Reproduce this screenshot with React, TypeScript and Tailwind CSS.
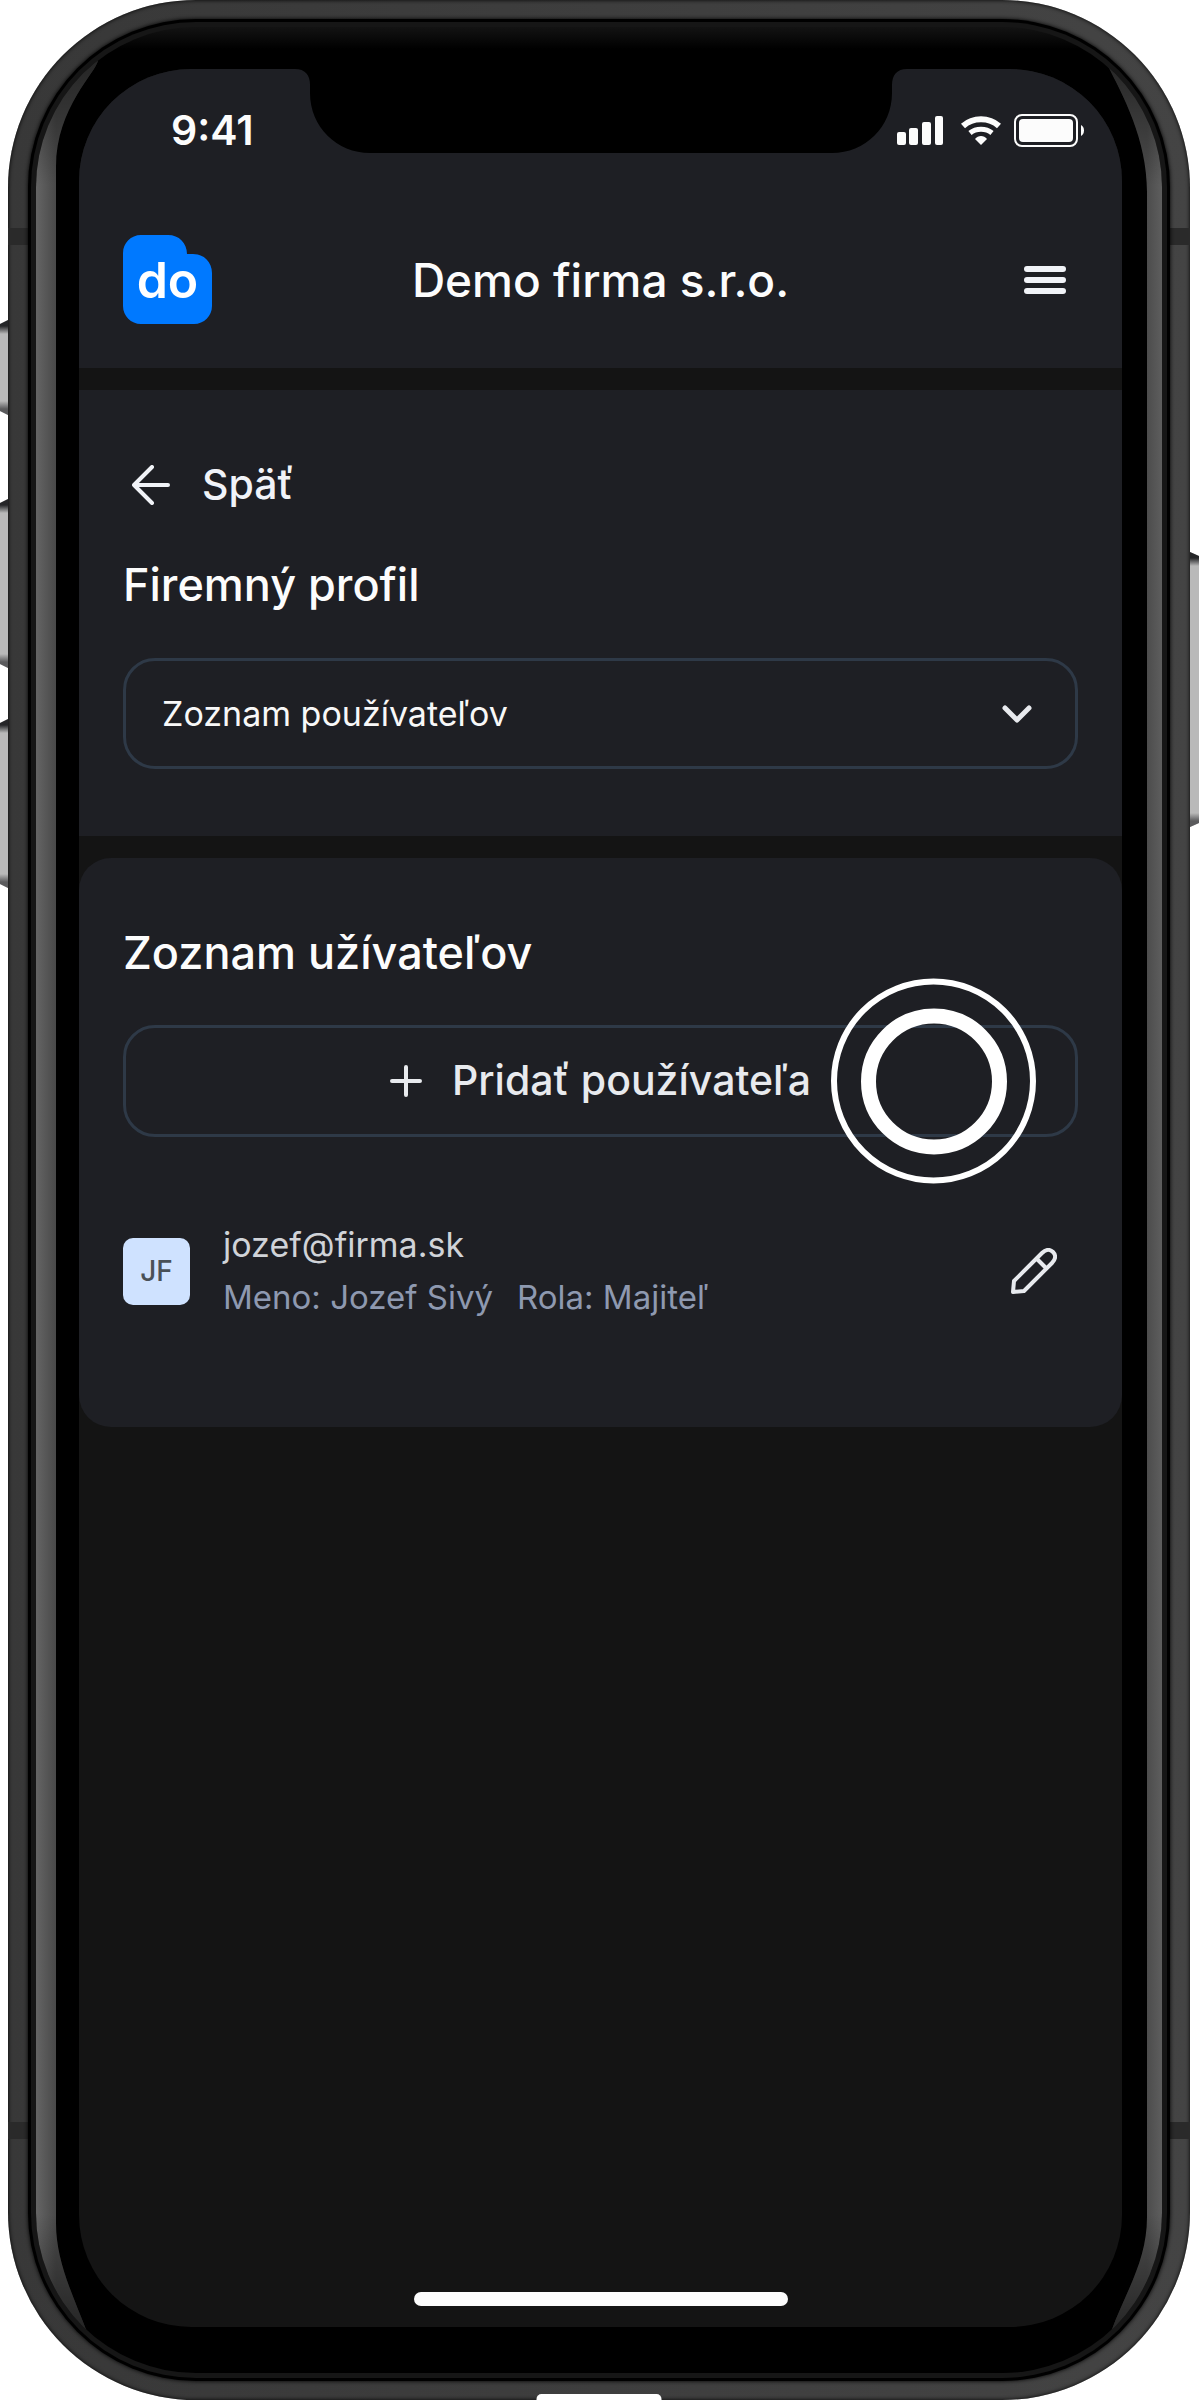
import React from 'react'
import clsx from 'clsx'

type UserRow = {
    initials: string
    email: string
    name: string
    role: string
}

const users: UserRow[] = [
    { initials: 'JF', email: 'jozef@firma.sk', name: 'Jozef Sivý', role: 'Majiteľ' },
]

const StatusIcons = () => (
    <svg width="188" height="34" viewBox="0 0 188 34" fill="#fcfcfc" aria-hidden="true">
        <rect x="0" y="18" width="9" height="13" rx="2" />
        <rect x="12" y="14" width="9" height="17" rx="2" />
        <rect x="25" y="8" width="9" height="23" rx="2" />
        <rect x="38" y="2" width="8" height="29" rx="2" />
        {/* wifi */}
        <g fill="none" stroke="#fcfcfc" strokeWidth="6">
            <path d="M66 12 C76 3 92 3 102 12" />
            <path d="M73 19 C79 14 89 14 95 19" strokeWidth="5" />
        </g>
        <path d="M78 25 C81 21 87 21 90 25 L84 31 Z" />
        {/* battery */}
        <rect x="118" y="1" width="62" height="31" rx="7" fill="none" stroke="#fcfcfc" strokeWidth="2" />
        <rect x="122" y="5" width="54" height="23" rx="4" />
        <path d="M184 11 C188 13 188 20 184 22 Z" />
    </svg>
)

const Notch = () => (
    <svg
        className="absolute top-0 left-1/2 -translate-x-1/2"
        width="612" height="84" viewBox="0 0 612 84" aria-hidden="true">
        <path d="M0 0 C10 0 15 6 15 16 V24 C15 58 42 84 75 84 H537 C570 84 597 58 597 24 V16 C597 6 602 0 612 0 Z" fill="#000" />
    </svg>
)

const Logo = () => (
    <a href="#" aria-label="do" className="relative block h-[89px] w-[89px]">
        <svg width="89" height="89" viewBox="0 0 89 89" aria-hidden="true">
            <path d="M18 0 H45 C56 0 64 8 64 19 H70 C81 19 89 27 89 38 V71 C89 81 81 89 71 89 H18 C8 89 0 81 0 71 V18 C0 8 8 0 18 0 Z" fill="#0079ff" />
        </svg>
        <span className="absolute inset-x-0 top-5 text-center text-[50px] leading-[50px] font-semibold text-white">do</span>
    </a>
)

const SideButton = ({ className }: { className: string }) => (
    <div className={clsx('absolute bg-[#b9b9b9]', className)}>
        <div className="h-full w-full bg-[linear-gradient(180deg,#252628_0,#252628_6px,transparent_14px,transparent_calc(100%_-_14px),#5a5a5c_calc(100%_-_6px),#5a5a5c_100%)]" />
    </div>
)

const AntennaBand = ({ className }: { className: string }) => (
    <div className={clsx('absolute h-[17px] w-[20px] bg-[#2a2a2a]', className)} />
)

// long reflections that run down both edges of the glass
const GlareFills = () => (
    <svg className="absolute" width="0" height="0" aria-hidden="true">
        <defs>
            <linearGradient id="glareLeft" gradientUnits="userSpaceOnUse" x1="0" x2="20" y1="0" y2="0">
                <stop offset="0" stopColor="#656565" />
                <stop offset="1" stopColor="#494949" />
            </linearGradient>
            <linearGradient id="glareRight" gradientUnits="userSpaceOnUse" x1="41" x2="56" y1="0" y2="0">
                <stop offset="0" stopColor="#4c4c4c" />
                <stop offset="1" stopColor="#5e5e5e" />
            </linearGradient>
            <linearGradient id="fadeTop" x1="0" x2="0" y1="0" y2="1">
                <stop offset="0" stopColor="#000" stopOpacity="0.5" />
                <stop offset="0.9" stopColor="#000" stopOpacity="0" />
            </linearGradient>
            <linearGradient id="fadeBottom" x1="0" x2="0" y1="0" y2="1">
                <stop offset="0.1" stopColor="#000" stopOpacity="0" />
                <stop offset="1" stopColor="#000" stopOpacity="0.5" />
            </linearGradient>
        </defs>
    </svg>
)

const GlareEnd = ({ width, d, fill, fade }: { width: number, d: string, fill: string, fade: string }) => (
    <svg width={width} height="172" viewBox={`0 0 ${width} 172`} aria-hidden="true">
        <path d={d} fill={fill} />
        <path d={d} fill={fade} />
    </svg>
)

const LeftGlare = () => (
    <div className="absolute inset-y-0 left-0 flex w-[62px] flex-col">
        <GlareEnd width={62} d="M62 33 C61 45 20 80 20 140 V172 H0 V60 L50 33 Z" fill="url(#glareLeft)" fade="url(#fadeTop)" />
        <div className="w-5 flex-1 bg-linear-to-r from-[#656565] to-[#494949]" />
        <GlareEnd width={62} d="M0 0 H20 V22 C20 60 36 92 51 131 H0 Z" fill="url(#glareLeft)" fade="url(#fadeBottom)" />
    </div>
)

const RightGlare = () => (
    <div className="absolute inset-y-0 right-0 flex w-[56px] flex-col items-end">
        <GlareEnd width={56} d="M0 35 C15 65 41 110 41 165 V172 H56 V35 Z" fill="url(#glareRight)" fade="url(#fadeTop)" />
        <div className="w-[15px] flex-1 bg-linear-to-r from-[#4c4c4c] to-[#5e5e5e]" />
        <GlareEnd width={56} d="M56 0 H41 V16 C41 60 20 90 5 131 H56 Z" fill="url(#glareRight)" fade="url(#fadeBottom)" />
    </div>
)

const TapMarker = () => (
    <div className="pointer-events-none absolute top-1/2 right-[42px] flex h-[205px] w-[205px] -translate-y-1/2 items-center justify-center rounded-full border-[6px] border-white">
        <div className="h-[146px] w-[146px] rounded-full border-[15px] border-white" />
    </div>
)

const Header = () => (
    <header className="bg-[#1e1f24]">
        <div className="flex h-[124px] items-center justify-between pr-[37px] pl-[92px]">
            <span className="text-[41px] font-semibold">9:41</span>
            <StatusIcons />
        </div>
        <div className="grid grid-cols-[1fr_auto_1fr] items-center px-11 pt-[42px] pb-11">
            <Logo />
            <h1 className="text-[46px] leading-[56px] font-medium">Demo firma s.r.o.</h1>
            <button type="button" aria-label="Menu" className="mr-3 flex w-[42px] flex-col gap-[5px] justify-self-end">
                <span className="h-[6px] rounded-full bg-[#f1f3f8]" />
                <span className="h-[6px] rounded-full bg-[#f1f3f8]" />
                <span className="h-[6px] rounded-full bg-[#f1f3f8]" />
            </button>
        </div>
    </header>
)

const ProfileSection = () => (
    <section className="bg-[#1e1f24] px-11 py-[67px]">
        <a href="#" className="flex h-[56px] items-center gap-8 pl-[9px] text-[41px] font-medium text-[#f1f3f8]">
            <svg width="38" height="40" viewBox="0 0 38 40" fill="none" stroke="currentColor" strokeWidth="4" strokeLinecap="round" strokeLinejoin="round" aria-hidden="true">
                <path d="M20 2 L2 20 L20 38 M2 20 H36" />
            </svg>
            Späť
        </a>
        <h2 className="mt-11 text-[45px] leading-[56px] font-medium">
            <label htmlFor="profile-page">Firemný profil</label>
        </h2>
        <div className="relative mt-[45px]">
            <select
                id="profile-page"
                className="block h-[111px] w-full appearance-none rounded-[32px] border-[3px] border-[#2e3947] bg-transparent px-9 text-[34px] text-[#f8f8f8]">
                <option>Zoznam používateľov</option>
            </select>
            <svg className="pointer-events-none absolute top-1/2 right-[46px] -translate-y-1/2" width="30" height="18" viewBox="0 0 30 18" fill="none" stroke="#e8eaee" strokeWidth="5" strokeLinecap="round" strokeLinejoin="round" aria-hidden="true">
                <path d="M3 3 L15 15 L27 3" />
            </svg>
        </div>
    </section>
)

const UserItem = ({ user }: { user: UserRow }) => (
    <li className="flex items-center">
        <div className="flex h-[67px] w-[67px] items-center justify-center rounded-[10px] bg-[#cfe2ff] text-[28px] font-medium text-[#495057]">
            {user.initials}
        </div>
        <div className="ml-[33px] flex-1 leading-[53px]">
            <p className="text-[34px] text-[#d0d3d8]">{user.email}</p>
            <p className="flex gap-6 text-[33px] text-[#8e99b0]">
                <span>Meno: {user.name}</span>
                <span>Rola: {user.role}</span>
            </p>
        </div>
        <button type="button" aria-label="Upraviť" className="mr-[21px]">
            <svg width="46" height="46" viewBox="0 0 46 46" fill="none" stroke="#e8eaee" strokeWidth="4" strokeLinejoin="round" aria-hidden="true">
                <path d="M2 44 L3 33 L31 5 C35 1 39 1 42 4 C45 7 45 11 41 15 L13 43 Z" />
                <path d="M26 11 L35 20" />
            </svg>
        </button>
    </li>
)

const UsersCard = () => (
    <section className="rounded-[32px] bg-[#1e1f24] px-11 pt-[67px] pb-[103px]">
        <h2 className="text-[45px] leading-[56px] font-medium">Zoznam užívateľov</h2>
        <div className="relative mt-11">
            <button
                type="button"
                className="flex h-28 w-full items-center justify-center gap-[30px] rounded-[32px] border-[3px] border-[#2e3947] text-[41px] font-medium text-[#e8eaee]">
                <svg width="32" height="32" viewBox="0 0 32 32" fill="none" stroke="currentColor" strokeWidth="4" strokeLinecap="round" aria-hidden="true">
                    <path d="M16 2 V30 M2 16 H30" />
                </svg>
                Pridať používateľa
            </button>
            <TapMarker />
        </div>
        <ul className="mt-[81px]">
            {users.map(user => <UserItem key={user.email} user={user} />)}
        </ul>
    </section>
)

const Screen = () => (
    <div className="relative flex flex-1 flex-col overflow-hidden rounded-[112px] bg-[#141414] text-[#fcfcfc]">
        <Header />
        <main className="mt-[22px] flex flex-col gap-[22px]">
            <ProfileSection />
            <UsersCard />
        </main>
        {/* home indicator */}
        <div className="mx-auto mt-auto mb-[21px] h-[14px] w-[374px] rounded-full bg-[#fcfcfc]" />
        <Notch />
    </div>
)

const App = () => {
    return (
        <div className="relative flex min-h-screen bg-white pr-[9px] pl-2 font-['Inter','Liberation_Sans',sans-serif]">
            <SideButton className="top-[320px] left-0 h-[95px] w-2 [clip-path:polygon(0_4px,100%_0,100%_100%,0_calc(100%_-_4px))]" />
            <SideButton className="top-[499px] left-0 h-[169px] w-2 [clip-path:polygon(0_4px,100%_0,100%_100%,0_calc(100%_-_4px))]" />
            <SideButton className="top-[719px] left-0 h-[169px] w-2 [clip-path:polygon(0_4px,100%_0,100%_100%,0_calc(100%_-_4px))]" />
            <SideButton className="top-[552px] right-0 h-[275px] w-[9px] [clip-path:polygon(0_0,100%_4px,100%_calc(100%_-_4px),0_100%)]" />
            <GlareFills />

            {/* metal frame > gasket > glass rim > bezel > screen */}
            <div className="relative flex flex-1 flex-col overflow-hidden rounded-[188px] bg-linear-to-r from-[#383838] to-[#444] px-5 py-[19px] shadow-[inset_0_0_4px_#000]">
                <AntennaBand className="top-[228px] left-0" />
                <AntennaBand className="top-[228px] right-0" />
                <AntennaBand className="bottom-[261px] left-0" />
                <AntennaBand className="right-0 bottom-[261px]" />
                <div className="relative flex flex-1 flex-col rounded-[168px] bg-black p-[3px] shadow-[0_0_4px_#000]">
                    <div className="flex flex-1 flex-col rounded-[165px] bg-[#161616] p-[5px]">
                        <div className="relative flex flex-1 flex-col overflow-hidden rounded-[160px] bg-black bg-[linear-gradient(180deg,#131313_0,#000_22px)] pt-[42px] pr-10 pb-[46px] pl-[43px]">
                            <LeftGlare />
                            <RightGlare />
                            <Screen />
                        </div>
                    </div>
                </div>
                <div className="absolute bottom-0 left-1/2 h-[6px] w-[125px] -translate-x-1/2 rounded-t-[5px] bg-white" />
            </div>
        </div>
    )
}

export default App
